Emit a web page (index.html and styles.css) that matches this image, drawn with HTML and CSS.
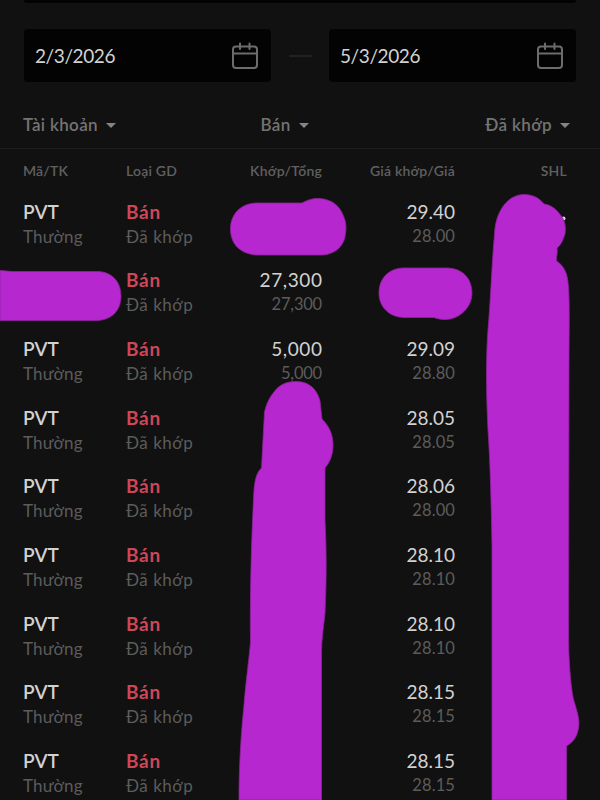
FILE: index.html
```html
<!DOCTYPE html>
<html lang="vi">
<head>
<meta charset="utf-8">
<title>Lịch sử lệnh</title>
<link rel="stylesheet" href="styles.css">
</head>
<body>
<main class="screen">
  <div class="search"></div>
  <section class="dates">
    <div class="date"><span>2/3/2026</span><svg class="cal" viewBox="0 0 28 28"><rect x="2" y="4.5" width="24" height="21.5" rx="3"/><path d="M2 11.5H26M9 1.5V7M18.5 1.5V7"/></svg></div>
    <span class="dash"></span>
    <div class="date"><span>5/3/2026</span><svg class="cal" viewBox="0 0 28 28"><rect x="2" y="4.5" width="24" height="21.5" rx="3"/><path d="M2 11.5H26M9 1.5V7M18.5 1.5V7"/></svg></div>
  </section>
  <nav class="filters">
    <span class="filter f-account">Tài khoản<i></i></span>
    <span class="filter f-side">Bán<i></i></span>
    <span class="filter f-status">Đã khớp<i></i></span>
  </nav>
  <div class="grid head"><span class="h-code">Mã/TK</span><span class="h-type">Loại GD</span><span class="num h-qty">Khớp/Tổng</span><span class="num h-price">Giá khớp/Giá</span><span class="num h-shl">SHL</span></div>
  <div class="grid row"><div><b>PVT</b><small>Thường</small></div><div><b class="sell">Bán</b><small class="status">Đã khớp</small></div><div></div><div class="num"><em>29.40</em><small>28.00</small></div><div></div></div>
  <div class="grid row"><div></div><div><b class="sell">Bán</b><small class="status">Đã khớp</small></div><div class="num qty"><em>27,300</em><small>27,300</small></div><div></div><div></div></div>
  <div class="grid row"><div><b>PVT</b><small>Thường</small></div><div><b class="sell">Bán</b><small class="status">Đã khớp</small></div><div class="num qty"><em>5,000</em><small>5,000</small></div><div class="num"><em>29.09</em><small>28.80</small></div><div></div></div>
  <div class="grid row"><div><b>PVT</b><small>Thường</small></div><div><b class="sell">Bán</b><small class="status">Đã khớp</small></div><div></div><div class="num"><em>28.05</em><small>28.05</small></div><div></div></div>
  <div class="grid row"><div><b>PVT</b><small>Thường</small></div><div><b class="sell">Bán</b><small class="status">Đã khớp</small></div><div></div><div class="num"><em>28.06</em><small>28.00</small></div><div></div></div>
  <div class="grid row"><div><b>PVT</b><small>Thường</small></div><div><b class="sell">Bán</b><small class="status">Đã khớp</small></div><div></div><div class="num"><em>28.10</em><small>28.10</small></div><div></div></div>
  <div class="grid row"><div><b>PVT</b><small>Thường</small></div><div><b class="sell">Bán</b><small class="status">Đã khớp</small></div><div></div><div class="num"><em>28.10</em><small>28.10</small></div><div></div></div>
  <div class="grid row"><div><b>PVT</b><small>Thường</small></div><div><b class="sell">Bán</b><small class="status">Đã khớp</small></div><div></div><div class="num"><em>28.15</em><small>28.15</small></div><div></div></div>
  <div class="grid row"><div><b>PVT</b><small>Thường</small></div><div><b class="sell">Bán</b><small class="status">Đã khớp</small></div><div></div><div class="num"><em>28.15</em><small>28.15</small></div><div></div></div>
  <svg class="marks" viewBox="0 0 600 800">
    <circle class="speck" cx="563.5" cy="218.5" r="2"/>
    <path d="M256 203H302C309 199 315 198 320 198.500C333 199.500 340 207 343 215C346 221 346.500 227 345.500 233C345 245 336 254 323 255H257C240 254 230.500 244 230.500 229C230.500 214 241 203.500 256 203Z"/>
    <path d="M0 270.500C5 270.500 8 271.500 13 271.500H97C112 271.500 121 282 121 296C121 311 111 320.500 96 320.500H0Z"/>
    <path d="M403 268H448C463 268.500 472 279 472 293C472 307 460 319 446 319.500C441 319.500 438 319 434 317.500H404C389 317 379 307 379 293C379 278 389 268.500 403 268Z"/>
    <path d="M296 381.500C309 381.500 317 389 320 401C321 407 321 413 322 419C329 426 333 434 333 445C333 455 330 462 325 468V520C327 560 326 590 325 613C323 632 321.500 640 321.500 655V800H239C239 765 241 735 244 705C246 680 249 660 250.500 642C250 600 251 550 253.500 500C254 485 255 474 261.500 468L264.500 412C267 402 270 397 274 392C279 385 286 381.500 296 381.500Z"/>
    <path d="M524 194.500C533 194.500 539 198 544 204C552 205 557 210 562 217C565 222 566 227 565 234C563 240 561 245 557 248C558 253 556 257 556.500 261C563 265 567 272 568 282C570 300 569 330 569 360L568.500 640C569 665 571 690 574 701C577 711 580 720 578.500 728C577 738 572 743 566.500 746V800H492V545C491 490 490 460 488 430C486 390 486 355 488 330C491 295 492 260 494.500 235C495 211 508 194.500 524 194.500Z"/>
  </svg>
</main>
</body>
</html>
```
FILE: styles.css
```css
* { box-sizing: border-box; }
body { margin: 0; background: #111; }
.screen {
  position: relative;
  width: 600px;
  height: 800px;
  overflow: hidden;
  background: #111;
  color: #d2d2d2;
  font-family: Lato, "Open Sans", sans-serif;
}
.search { height: 3px; margin: 0 24px; background: #030303; border-radius: 0 0 3px 3px; }
.dates { display: flex; align-items: center; justify-content: space-between; margin: 26px 24px 0; height: 53px; }
.date {
  display: flex;
  align-items: center;
  justify-content: space-between;
  width: 247px;
  height: 53px;
  padding: 0 12px 0 11px;
  background: #030303;
  border-radius: 4px;
  font-size: 19px;
  letter-spacing: -0.4px;
}
.cal { width: 28px; height: 28px; fill: none; stroke: #6c6c6c; stroke-width: 2; stroke-linecap: round; }
.dash { width: 23px; height: 2px; background: #222; }
.filters { display: grid; grid-template-columns: 1fr 1fr 1fr; height: 67px; padding: 20px 30px 0 23px; border-bottom: 1px solid #1d1d1d; color: #747474; font-size: 17px; line-height: 46px; font-weight: 600; }
.filter { display: flex; align-items: center; gap: 8px; height: 46px; letter-spacing: 0.35px; }
.filter i { border: 5px solid transparent; border-top-color: #858585; border-bottom: 0; }
.f-side { justify-content: center; padding-right: 24px; }
.f-status { justify-content: flex-end; }
.grid { display: grid; grid-template-columns: 103px 100px 96px 133px 112px; margin-left: 23px; }
.num { text-align: right; }
.head { height: 49.5px; line-height: 44px; color: #606060; font-size: 14px; font-weight: 600; letter-spacing: 0.2px; white-space: nowrap; }
.row { height: 68.7px; white-space: nowrap; }
.row b, .row em, .row small { display: block; height: 25px; line-height: 25px; font-style: normal; }
.row b { font-size: 19px; font-weight: 600; }
.row em { font-size: 19px; }
.row small { font-size: 17px; color: #5c5c5c; letter-spacing: 0.15px; }
.row .sell { color: #cf4657; font-weight: 700; letter-spacing: 0.7px; }
.row .status { letter-spacing: 0.5px; }
.row .num small { font-size: 16.5px; letter-spacing: 0.1px; }
.row .qty em { letter-spacing: 0.6px; margin-right: -0.6px; }
.row .qty small { letter-spacing: -0.2px; }
.marks { position: absolute; inset: 0; width: 600px; height: 800px; fill: #b627d0; stroke: #8b2499; stroke-width: 0.8; }
.marks .speck { fill: #d8d8d8; stroke: none; }
```
